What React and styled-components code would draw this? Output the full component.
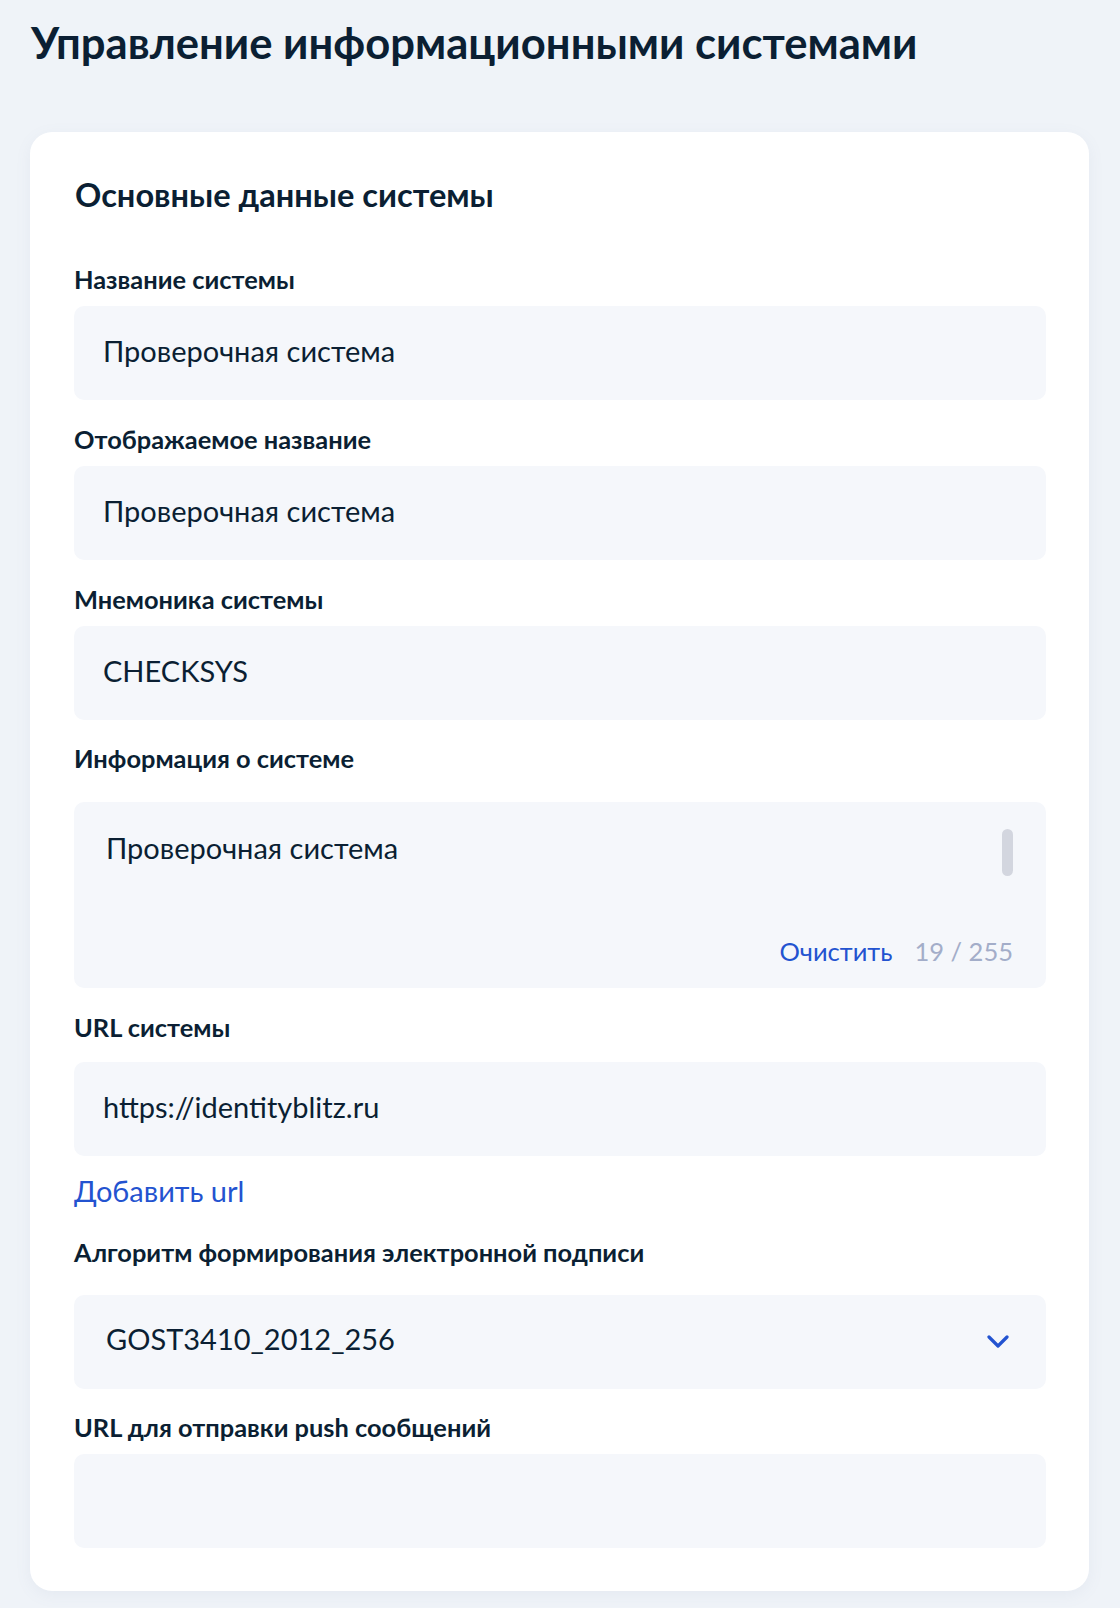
import React from "react";
import styled, { createGlobalStyle } from "styled-components";

const Global = createGlobalStyle`
  html, body { margin: 0; padding: 0; background: #eff3f8; }
  body { font-family: Lato, "Noto Sans", sans-serif; color: #0b1f33; }
  * { box-sizing: border-box; }
`;

const Page = styled.div`
  padding: 14px 31px 16px 30px;
  display: flex;
  flex-direction: column;
`;

const Title = styled.h1`
  margin: 0 0 62px 1px;
  font-size: 43.6px;
  line-height: 56px;
  font-weight: 700;
  color: #0b1f33;
`;

const Card = styled.section`
  background: #ffffff;
  border-radius: 22px;
  box-shadow: 0 4px 16px rgba(110, 130, 170, 0.08);
  padding: 43px 43px 43px 44px;
  display: flex;
  flex-direction: column;
`;

const SectionTitle = styled.h2`
  margin: 0 0 52px 1px;
  font-size: 32.6px;
  line-height: 40px;
  font-weight: 700;
`;

const Field = styled.div`
  display: flex;
  flex-direction: column;
  margin-bottom: ${(p) => p.$mb ?? 27}px;
  &:last-child { margin-bottom: 0; }
`;

const Label = styled.label`
  font-size: 25.4px;
  line-height: 24px;
  font-weight: 700;
  margin: 0 0 ${(p) => p.$gap ?? 15}px 0;
  white-space: nowrap;
`;

const Box = styled.div`
  background: #f5f7fb;
  border-radius: 10px;
  height: 94px;
  display: flex;
  align-items: center;
  padding: 0 ${(p) => p.$pr ?? 30}px ${(p) => p.$pb ?? 5}px ${(p) => p.$pl ?? 29}px;
  font-size: 29px;
  color: #0b1f33;
`;

const Value = styled.span`
  flex: 1;
  white-space: nowrap;
`;

const ChevronWrap = styled.span`
  display: flex;
  margin-top: ${(p) => p.$mt ?? 0}px;
`;

const TextArea = styled.div`
  position: relative;
  background: #f5f7fb;
  border-radius: 10px;
  height: 186px;
  padding: 29px 33px 0 32px;
  display: flex;
  flex-direction: column;
  font-size: 29px;
  line-height: 34px;
`;

const AreaText = styled.div`
  flex: 1;
`;

const Scroll = styled.div`
  position: absolute;
  right: 33px;
  top: 27px;
  width: 11px;
  height: 47px;
  border-radius: 6px;
  background: #d3d6df;
`;

const AreaFooter = styled.div`
  display: flex;
  justify-content: flex-end;
  align-items: baseline;
  gap: 22px;
  font-size: 25.5px;
  line-height: 32px;
  padding-bottom: 21px;
`;

const ClearLink = styled.span`
  color: #2353d0;
`;

const Counter = styled.span`
  color: #a3adc9;
`;

const AddLink = styled.a`
  display: block;
  font-size: 29px;
  line-height: 36px;
  color: #2353d0;
  text-decoration: none;
  margin: 17px 0 31px 0;
  cursor: pointer;
`;

const Chevron = () => (
  <svg width="22" height="14" viewBox="0 0 22 14" fill="none">
    <path d="M2 2L11 11L20 2" stroke="#2353d0" strokeWidth="3.2" strokeLinecap="round" strokeLinejoin="round" />
  </svg>
);

export default function App() {
  return (
    <>
      <Global />
      <Page>
        <Title>Управление информационными системами</Title>
        <Card>
          <SectionTitle>Основные данные системы</SectionTitle>
          <Field>
            <Label>Название системы</Label>
            <Box><Value>Проверочная система</Value></Box>
          </Field>
          <Field>
            <Label>Отображаемое название</Label>
            <Box><Value>Проверочная система</Value></Box>
          </Field>
          <Field $mb={26}>
            <Label>Мнемоника системы</Label>
            <Box><Value>CHECKSYS</Value></Box>
          </Field>
          <Field>
            <Label $gap={32}>Информация о системе</Label>
            <TextArea>
              <AreaText>Проверочная система</AreaText>
              <Scroll />
              <AreaFooter>
                <ClearLink>Очистить</ClearLink>
                <Counter>19 / 255</Counter>
              </AreaFooter>
            </TextArea>
          </Field>
          <Field $mb={0}>
            <Label $gap={23}>URL системы</Label>
            <Box><Value>https://identityblitz.ru</Value></Box>
          </Field>
          <AddLink>Добавить url</AddLink>
          <Field $mb={26}>
            <Label $gap={31}>Алгоритм формирования электронной подписи</Label>
            <Box $pl={32} $pr={37} $pb={8}>
              <Value>GOST3410_2012_256</Value>
              <ChevronWrap $mt={8}>
                <Chevron />
              </ChevronWrap>
            </Box>
          </Field>
          <Field>
            <Label>URL для отправки push сообщений</Label>
            <Box />
          </Field>
        </Card>
      </Page>
    </>
  );
}
